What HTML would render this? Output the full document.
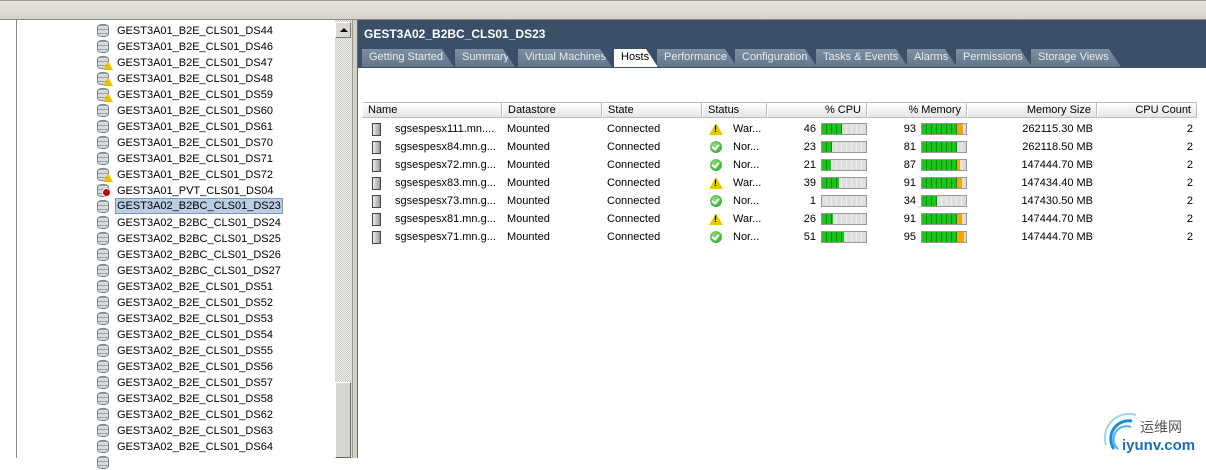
<!DOCTYPE html>
<html><head><meta charset="utf-8"><style>
*{margin:0;padding:0;box-sizing:border-box}
body{width:1206px;height:458px;overflow:hidden;background:#fff;font-family:"Liberation Sans",Arial,sans-serif;font-size:11px;color:#000;position:relative}
.a{position:absolute}
.top{left:0;top:0;width:1206px;height:20px;background:linear-gradient(#e8e6e0,#d6d3cb);border-top:1px solid #999;border-bottom:1px solid #8a8a8a}
.left{left:16px;top:20px;width:320px;height:438px;background:#fff;border-left:1px solid #888}
.tr{position:absolute;left:80px;height:16px;line-height:16px;white-space:nowrap}
.tr span{position:absolute;left:19px;top:1px;padding:0 1px}
.sel span{background:#b9cde3;border:1px solid #7d9ab8;line-height:14px;left:18px;top:0}
.db{position:absolute;left:0;top:2px;width:12px;height:13px;border-radius:5px/3px;background:repeating-linear-gradient(#9aa0a6 0 1px,#d7dadd 1px 4px);border:1px solid #7c8288}
.warn{position:absolute;left:6px;top:7px;width:0;height:0;border-left:5px solid transparent;border-right:5px solid transparent;border-bottom:9px solid #e8c000}
.err{position:absolute;left:5px;top:6px;width:9px;height:9px;border-radius:50%;background:#c00;border:1px solid #fff}
.sb{left:335px;top:20px;width:17px;height:438px;background:repeating-conic-gradient(#c8c6c0 0 25%,#f2f1ee 0 50%) 0 0/2px 2px}
.sbtn{left:335px;top:22px;width:16px;height:16px;background:#dcdad4;border:1px solid;border-color:#fff #777 #777 #fff}
.sbtn:after{content:"";position:absolute;left:4px;top:5px;border-left:4px solid transparent;border-right:4px solid transparent;border-bottom:4px solid #000}
.thumb{left:335px;top:382px;width:16px;height:76px;background:#d8d6d0;border:1px solid;border-color:#fff #666 #666 #fff}
.div{left:352px;top:20px;width:6px;height:438px;background:#d4d0c8;border-left:1px solid #999;border-right:1px solid #666}
.hdr{left:358px;top:20px;width:848px;height:48px;background:#3b5068}
.title{left:364px;top:27px;color:#fff;font-weight:bold;font-size:12px}
.tab{position:absolute;top:49px;height:18px;line-height:17px;padding-left:7px;color:#e8edf2;background:linear-gradient(#7e8fa2,#62758a);clip-path:polygon(0 0,calc(100% - 12px) 0,100% 100%,0 100%);white-space:nowrap}
.tab.on{background:#fff;color:#000}
.th{position:absolute;top:102px;height:16px;line-height:15px;background:linear-gradient(#fff,#e4e4e4);border:1px solid #bcbcbc;border-left:1px solid #fff;padding:0 5px;white-space:nowrap}
.r{text-align:right}
.cell{position:absolute;height:18px;line-height:14px;white-space:nowrap}
.srv{position:absolute;width:9px;height:13px;border:1px solid #444;background:linear-gradient(90deg,#eee,#999)}
.ok{position:absolute;width:12px;height:12px;border-radius:50%;background:radial-gradient(circle at 40% 35%,#8de07a,#1f9a1f)}
.ok:after{content:"";position:absolute;left:3px;top:2px;width:3px;height:5px;border:solid #fff;border-width:0 2px 2px 0;transform:rotate(40deg)}
.tw{position:absolute;width:0;height:0;border-left:7px solid transparent;border-right:7px solid transparent;border-bottom:12px solid #e8c800}
.tw:after{content:"!";position:absolute;left:-2px;top:1px;font-size:9px;font-weight:bold}
.bar{position:absolute;width:46px;height:12px;border:1px solid #999;background:repeating-linear-gradient(90deg,#ddd 0 4px,#eee 4px 5px)}
.bar i{position:absolute;left:0;top:0;height:10px;background:repeating-linear-gradient(90deg,#17c617 0 4px,#0a8a0a 4px 5px)}
.bar b{position:absolute;top:0;height:10px;background:#f0a800}
.logo{left:1100px;top:405px}
</style></head><body>
<div class="a top"></div>
<div class="a left" id="tree"></div>
<div class="a sb"></div><div class="a sbtn"></div><div class="a thumb"></div>
<div class="a div"></div>
<div class="a hdr"></div>
<div class="a title">GEST3A02_B2BC_CLS01_DS23</div>
<div id="tabs"></div>
<div id="tbl"></div>
<div class="a logo">
<svg width="100" height="50" viewBox="0 0 100 50"><path d="M14 44 A18 18 0 0 1 32 16" stroke="#1a8fd8" stroke-width="3" fill="none"/><path d="M18 44 A13 13 0 0 1 31 22" stroke="#4bb0ea" stroke-width="2" fill="none"/><path d="M6 40 A24 24 0 0 1 36 10" stroke="#9fd2f2" stroke-width="2" fill="none"/>
<text x="40" y="27" font-family="Noto Sans CJK SC,sans-serif" font-size="14" fill="#555">运维网</text>
<text x="22" y="45" font-family="Liberation Sans,sans-serif" font-size="15" font-weight="bold" fill="#1a6fb8">iyunv.com</text></svg></div>
<script>
var t=[["GEST3A01_B2E_CLS01_DS44",0],["GEST3A01_B2E_CLS01_DS46",0],["GEST3A01_B2E_CLS01_DS47",1],["GEST3A01_B2E_CLS01_DS48",1],["GEST3A01_B2E_CLS01_DS59",1],["GEST3A01_B2E_CLS01_DS60",0],["GEST3A01_B2E_CLS01_DS61",0],["GEST3A01_B2E_CLS01_DS70",0],["GEST3A01_B2E_CLS01_DS71",0],["GEST3A01_B2E_CLS01_DS72",1],["GEST3A01_PVT_CLS01_DS04",2],["GEST3A02_B2BC_CLS01_DS23",3],["GEST3A02_B2BC_CLS01_DS24",0],["GEST3A02_B2BC_CLS01_DS25",0],["GEST3A02_B2BC_CLS01_DS26",0],["GEST3A02_B2BC_CLS01_DS27",0],["GEST3A02_B2E_CLS01_DS51",0],["GEST3A02_B2E_CLS01_DS52",0],["GEST3A02_B2E_CLS01_DS53",0],["GEST3A02_B2E_CLS01_DS54",0],["GEST3A02_B2E_CLS01_DS55",0],["GEST3A02_B2E_CLS01_DS56",0],["GEST3A02_B2E_CLS01_DS57",0],["GEST3A02_B2E_CLS01_DS58",0],["GEST3A02_B2E_CLS01_DS62",0],["GEST3A02_B2E_CLS01_DS63",0],["GEST3A02_B2E_CLS01_DS64",0],["",0]];
var h="";t.forEach(function(x,i){h+='<div class="tr'+(x[1]==3?' sel':'')+'" style="top:'+(2+i*16)+'px"><div class="db"></div>'+(x[1]==1?'<div class="warn"></div>':'')+(x[1]==2?'<div class="err"></div>':'')+'<span>'+x[0]+'</span></div>'});
document.getElementById('tree').innerHTML=h;
var tb=[["Getting Started",362,92],["Summary",455,60],["Virtual Machines",518,94],["Hosts",614,44],["Performance",657,80],["Configuration",735,82],["Tasks & Events",816,92],["Alarms",907,50],["Permissions",956,76],["Storage Views",1031,90]];
h="";tb.forEach(function(x){h+='<div class="tab'+(x[0]=="Hosts"?' on':'')+'" style="left:'+x[1]+'px;width:'+x[2]+'px">'+x[0].replace('&','&amp;')+'</div>'});
document.getElementById('tabs').innerHTML=h;
var c=[["Name",362,140,""],["Datastore",502,100,""],["State",602,100,""],["Status",702,65,""],["% CPU",767,100,"r"],["% Memory",867,100,"r"],["Memory Size",967,130,"r"],["CPU Count",1097,100,"r"]];
h="";c.forEach(function(x){h+='<div class="th '+x[3]+'" style="left:'+x[1]+'px;width:'+x[2]+'px">'+x[0]+'</div>'});
var rows=[["sgsespesx111.mn....",1,46,93,"262115.30 MB"],["sgsespesx84.mn.g...",0,23,81,"262118.50 MB"],["sgsespesx72.mn.g...",0,21,87,"147444.70 MB"],["sgsespesx83.mn.g...",1,39,91,"147434.40 MB"],["sgsespesx73.mn.g...",0,1,34,"147430.50 MB"],["sgsespesx81.mn.g...",1,26,91,"147444.70 MB"],["sgsespesx71.mn.g...",0,51,95,"147444.70 MB"]];
rows.forEach(function(r,i){var y=122+i*18;
h+='<div class="srv" style="left:372px;top:'+(y+1)+'px"></div>';
h+='<div class="cell" style="left:395px;top:'+y+'px">'+r[0]+'</div>';
h+='<div class="cell" style="left:507px;top:'+y+'px">Mounted</div>';
h+='<div class="cell" style="left:607px;top:'+y+'px">Connected</div>';
h+=(r[1]?'<div class="tw" style="left:709px;top:'+(y+1)+'px"></div>':'<div class="ok" style="left:710px;top:'+(y+1)+'px"></div>');
h+='<div class="cell" style="left:733px;top:'+y+'px">'+(r[1]?'War...':'Nor...')+'</div>';
h+='<div class="cell r" style="left:780px;width:36px;top:'+y+'px">'+r[2]+'</div>';
h+='<div class="bar" style="left:821px;top:'+(y+1)+'px"><i style="width:'+Math.round(r[2]*0.44)+'px"></i></div>';
h+='<div class="cell r" style="left:880px;width:36px;top:'+y+'px">'+r[3]+'</div>';
var g=Math.min(r[3],80)*0.44,o=r[3]>80?(r[3]-80)*0.44:0;
h+='<div class="bar" style="left:921px;top:'+(y+1)+'px"><i style="width:'+Math.round(g)+'px"></i><b style="left:'+Math.round(g)+'px;width:'+Math.round(o)+'px"></b></div>';
h+='<div class="cell r" style="left:980px;width:113px;top:'+y+'px">'+r[4]+'</div>';
h+='<div class="cell r" style="left:1150px;width:43px;top:'+y+'px">2</div>';});
document.getElementById('tbl').innerHTML=h;
</script>
</body></html>
